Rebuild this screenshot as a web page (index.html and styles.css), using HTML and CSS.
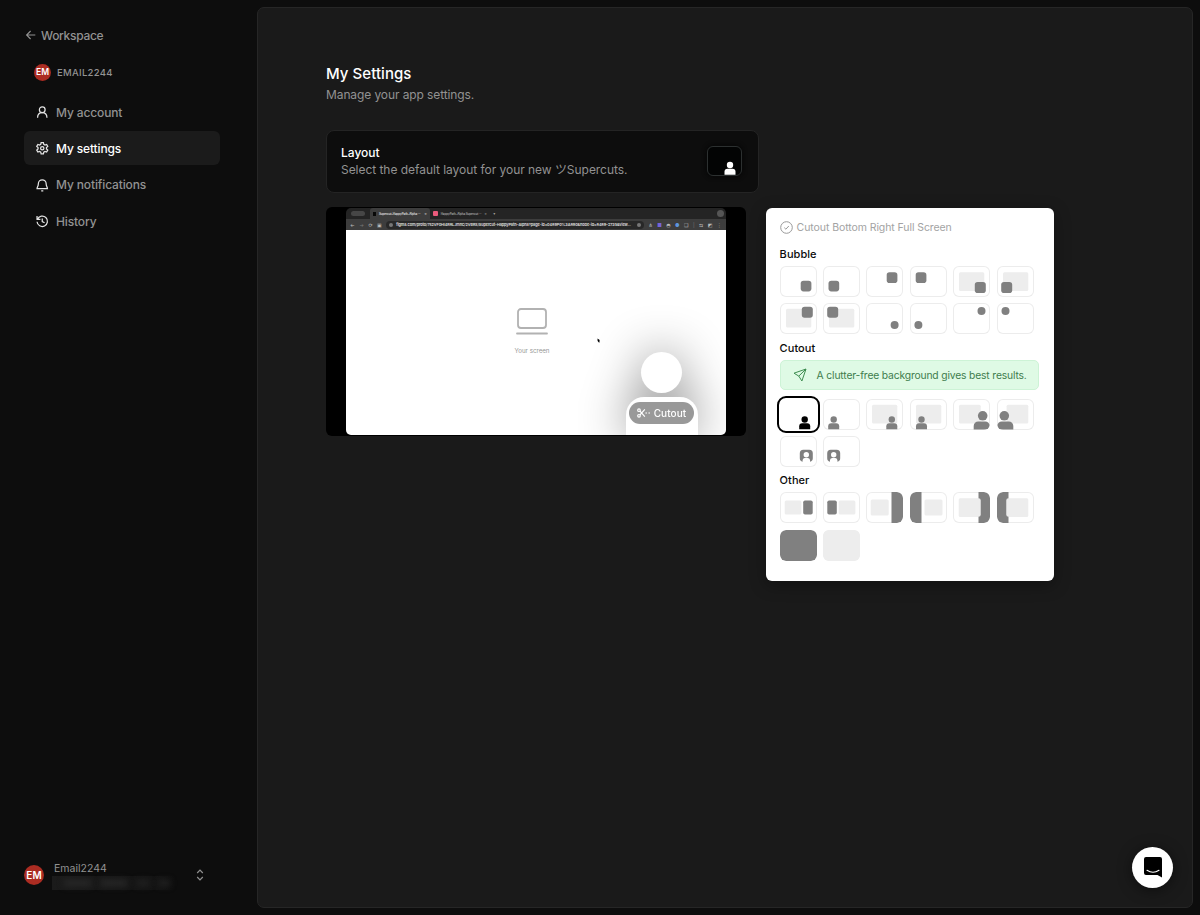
FILE: index.html
```
<!DOCTYPE html>
<html lang="en">

<head>
    <meta charset="UTF-8">
    <meta name="viewport" content="width=device-width, initial-scale=1.0">
    <title>My Settings</title>
    <link rel="stylesheet" href="styles.css">
</head>

<body>
    <!-- shared shapes for the layout tiles -->
    <svg class="defs" width="0" height="0">
        <symbol id="person" viewBox="0 0 11 13" overflow="visible">
            <circle cx="5.5" cy="3.2" r="3.2" />
            <path d="M0 13V10a3 3 0 0 1 3-3h5a3 3 0 0 1 3 3v3z" />
        </symbol>
        <symbol id="framed" viewBox="0 0 13 12" overflow="visible">
            <path fill-rule="evenodd" d="M3.5 0h6A3.5 3.5 0 0 1 13 3.5v5A3.5 3.5 0 0 1 10.2 12V10.5Q10.2 8.6 8.2 8.3H4.8Q2.8 8.6 2.8 10.5V12A3.5 3.5 0 0 1 0 8.5v-5A3.5 3.5 0 0 1 3.5 0zM6.5 2.2a2.7 2.7 0 1 0 0 5.4a2.7 2.7 0 1 0 0-5.4z" />
        </symbol>
    </svg>

    <aside class="sidebar">
        <a class="back">
            <svg width="12" height="12" viewBox="0 0 12 12"><path d="M10.3 6H1.7M5.6 2L1.6 6l4 4" /></svg>
            <span>Workspace</span>
        </a>
        <div class="team">
            <span class="avatar avatar-sm">EM</span>
            <span class="team-name">EMAIL2244</span>
        </div>
        <nav class="menu">
            <a class="menu-item">
                <svg viewBox="0 0 24 24"><circle cx="12" cy="7" r="5.5" /><path d="M3 22.500c0-6 3.500-10 9-10s9 4 9 10" /></svg>
                <span>My account</span>
            </a>
            <a class="menu-item active">
                <svg viewBox="0 0 24 24"><path d="M9.800 1h4.400l.7 3.400 2.300 1.350 3.200-1.150 2.200 3.800-2.500 2.350v2.500l2.500 2.350-2.200 3.800-3.200-1.150-2.300 1.350-.7 3.400H9.800l-.7-3.400-2.300-1.350-3.200 1.150-2.200-3.800 2.500-2.350v-2.500L1.400 8.400l2.200-3.800 3.200 1.150 2.300-1.350z" /><circle cx="12" cy="12" r="3.200" /></svg>
                <span>My settings</span>
            </a>
            <a class="menu-item">
                <svg viewBox="0 0 24 24"><path d="M4.500 9a7.500 7.500 0 0 1 15 0c0 5 2.500 6.500 2.500 9.500H2C2 15.500 4.500 14 4.500 9zM10 22.800h4" /></svg>
                <span>My notifications</span>
            </a>
            <a class="menu-item">
                <svg viewBox="0 0 24 24"><path d="M2 2v6.500h6.500M2.800 8A10 10 0 1 1 2 13M12 6.500v6l4.500 2.300" /></svg>
                <span>History</span>
            </a>
        </nav>
        <div class="user">
            <span class="avatar">EM</span>
            <div class="user-info">
                <span>Email2244</span>
                <div class="redacted"><i></i><i></i><i></i><i></i></div>
            </div>
            <svg class="chevrons" width="8" height="12" viewBox="0 0 8 12"><path d="M1.200 4L4 1.200 6.800 4M1.200 8L4 10.800 6.800 8" /></svg>
        </div>
    </aside>

    <main class="content">
        <h1>My Settings</h1>
        <p class="subtitle">Manage your app settings.</p>

        <section class="layout-card">
            <div>
                <h2>Layout</h2>
                <p>Select the default layout for your new ツSupercuts.</p>
            </div>
            <div class="current">
                <svg width="33" height="28" viewBox="0 0 33 28"><use href="#person" x="16.500" y="14.800" width="11" height="13" /></svg>
            </div>
        </section>

        <div class="row">
            <div class="preview">
                <div class="screen">
                    <div class="tabs">
                        <i class="window-btns"></i>
                        <span class="tab tab-active"><i class="dot"></i><b>Supercut–HappyPath–Alpha ···</b><em>×</em></span>
                        <span class="tab"><i class="dot pink"></i><b>HappyPath–Alpha Supercut ···</b><em>×</em></span>
                        <span class="plus">+</span>
                        <i class="tab-menu"></i>
                    </div>
                    <div class="toolbar">
                        <span>←</span><span class="dim">→</span><span>⟳</span><span>▣</span>
                        <div class="url"><i></i><b>figma.com/proto/7s2VF0HI4R8LJmnc/2VBRx/Supercut–HappyPath–Alpha?page-id=0489P0%3A890&amp;node-id=8489–2735&amp;view...</b><i></i></div>
                        <span>⋔</span><span class="violet">■</span><span>◓</span><span class="blue">●</span><span>❑</span><span class="dim">|</span><span>⇆</span><span>◩</span><span>⋮</span>
                    </div>
                    <div class="page">
                        <div class="your-screen">
                            <svg width="34" height="28" viewBox="0 0 34 28"><rect x="3" y="1" width="28" height="19" rx="3" /><path d="M2 25.500h30" stroke-linecap="round" /></svg>
                            <span>Your screen</span>
                        </div>
                        <svg class="cursor" width="4" height="5" viewBox="0 0 4 5"><path d="M.5.500l2.500 1.800-.8.500.6 1.500-.9.200L.6 3z" /></svg>
                        <div class="figure">
                            <div class="head"></div>
                            <div class="torso">
                                <div class="pill">
                                    <svg width="14" height="10" viewBox="0 0 14 10"><circle cx="2" cy="2.200" r="1.300" /><circle cx="2" cy="7.800" r="1.300" /><path d="M3 3.100L7.800 8.600M3 6.900L7.800 1.400M8.400 5h1.600M11.400 5h1.600" /></svg>
                                    Cutout
                                </div>
                            </div>
                        </div>
                    </div>
                </div>
            </div>

            <div class="picker">
                <div class="selected-name">
                    <svg width="13" height="13" viewBox="0 0 13 13"><circle cx="6.500" cy="6.500" r="5.800" /><path d="M4.300 6.700l1.600 1.500 2.900-3.200" /></svg>
                    <span>Cutout Bottom Right Full Screen</span>
                </div>

                <h3>Bubble</h3>
                <div class="tiles">
                    <svg class="tile" viewBox="0 0 37 31"><rect x="20.700" y="14.700" width="10.700" height="10.700" rx="2.800" /></svg>
                    <svg class="tile" viewBox="0 0 37 31"><rect x="5.500" y="14.700" width="10.700" height="10.700" rx="2.800" /></svg>
                    <svg class="tile" viewBox="0 0 37 31"><rect x="20.700" y="6.300" width="10.700" height="10.700" rx="2.800" /></svg>
                    <svg class="tile" viewBox="0 0 37 31"><rect x="5.700" y="6.300" width="10.700" height="10.700" rx="2.800" /></svg>
                    <svg class="tile" viewBox="0 0 37 31"><rect class="light" x="6" y="6.300" width="25.300" height="18.700" rx="1.500" /><rect x="21.800" y="16" width="11" height="11" rx="2.800" /></svg>
                    <svg class="tile" viewBox="0 0 37 31"><rect class="light" x="6" y="6.300" width="25.300" height="18.700" rx="1.500" /><rect x="4.200" y="16" width="11" height="11" rx="2.800" /></svg>
                    <svg class="tile" viewBox="0 0 37 31"><rect class="light" x="6" y="5.800" width="25.300" height="18.700" rx="1.500" /><rect x="21.800" y="3.800" width="11" height="11" rx="2.800" /></svg>
                    <svg class="tile" viewBox="0 0 37 31"><rect class="light" x="6" y="5.800" width="25.300" height="18.700" rx="1.500" /><rect x="4.200" y="3.800" width="11" height="11" rx="2.800" /></svg>
                    <svg class="tile" viewBox="0 0 37 31"><circle cx="28.600" cy="22" r="4" /></svg>
                    <svg class="tile" viewBox="0 0 37 31"><circle cx="8.400" cy="22" r="4" /></svg>
                    <svg class="tile" viewBox="0 0 37 31"><circle cx="28.500" cy="8" r="4" /></svg>
                    <svg class="tile" viewBox="0 0 37 31"><circle cx="8.500" cy="8" r="4" /></svg>
                </div>

                <h3>Cutout</h3>
                <div class="tip">
                    <svg width="14" height="14" viewBox="0 0 14 14"><path d="M13 1L1 5.200l4.800 2.900L8.900 13zM13 1L5.800 8.100" /></svg>
                    <span>A clutter-free background gives best results.</span>
                </div>
                <div class="tiles">
                    <svg class="tile selected" viewBox="0 0 37 31"><use href="#person" x="19.200" y="17.300" width="11" height="13" /></svg>
                    <svg class="tile" viewBox="0 0 37 31"><use href="#person" x="5.200" y="17.300" width="11" height="13" /></svg>
                    <svg class="tile" viewBox="0 0 37 31"><rect class="light" x="6" y="5.800" width="25.300" height="18.700" rx="1.500" /><use href="#person" x="20.300" y="17.300" width="11" height="13" /></svg>
                    <svg class="tile" viewBox="0 0 37 31"><rect class="light" x="6" y="5.800" width="25.300" height="18.700" rx="1.500" /><use href="#person" x="6" y="17.300" width="11" height="13" /></svg>
                    <svg class="tile" viewBox="0 0 37 31"><rect class="light" x="6" y="5.800" width="21.700" height="18.700" rx="1.500" /><circle cx="29.700" cy="16.800" r="4.800" /><path d="M20.700 30.600V27a4.500 4.500 0 0 1 4.500-4.500h7A4.500 4.500 0 0 1 36.700 27q-.5 3.600-4 3.600z" /></svg>
                    <svg class="tile" viewBox="0 0 37 31"><rect class="light" x="9.600" y="5.800" width="21.700" height="18.700" rx="1.500" /><circle cx="7.300" cy="16.800" r="4.800" /><path d="M16.300 30.600V27a4.500 4.500 0 0 0-4.500-4.500h-7A4.500 4.500 0 0 0 .3 27q.5 3.600 4 3.600z" /></svg>
                    <svg class="tile" viewBox="0 0 37 31"><use href="#framed" x="19.800" y="13.800" width="13" height="12" /></svg>
                    <svg class="tile" viewBox="0 0 37 31"><use href="#framed" x="4.200" y="13.800" width="13" height="12" /></svg>
                </div>

                <h3>Other</h3>
                <div class="tiles">
                    <svg class="tile" viewBox="0 0 37 31"><rect class="light" x="4.700" y="8.500" width="16.700" height="14" rx="1.500" /><rect x="23.200" y="8.500" width="9.500" height="14" rx="1.800" /></svg>
                    <svg class="tile" viewBox="0 0 37 31"><rect x="4.300" y="8.500" width="9.500" height="14" rx="1.800" /><rect class="light" x="15.700" y="8.500" width="16.700" height="14" rx="1.500" /></svg>
                    <svg class="tile" viewBox="0 0 37 31"><rect class="light" x="4.700" y="7.500" width="18" height="16" rx="1.500" /><path d="M25.500 0H31a6 6 0 0 1 6 6v19a6 6 0 0 1-6 6h-5.500z" /></svg>
                    <svg class="tile" viewBox="0 0 37 31"><path d="M11.500 0H6a6 6 0 0 0-6 6v19a6 6 0 0 0 6 6h5.500z" /><rect class="light" x="14.500" y="7.500" width="18" height="16" rx="1.500" /></svg>
                    <svg class="tile" viewBox="0 0 37 31"><rect class="light" x="5.700" y="6.300" width="22" height="18.700" rx="1.500" /><path d="M25.500 0H31a6 6 0 0 1 6 6v19a6 6 0 0 1-6 6h-5.500v-6.200q2.200 0 2.200-2V8.200q0-2-2.200-2z" /></svg>
                    <svg class="tile" viewBox="0 0 37 31"><rect class="light" x="9.300" y="6.300" width="22" height="18.700" rx="1.500" /><path d="M11.500 0H6a6 6 0 0 0-6 6v19a6 6 0 0 0 6 6h5.500v-6.200q-2.200 0-2.200-2V8.200q0-2 2.200-2z" /></svg>
                    <svg class="tile" viewBox="0 0 37 31"><rect width="37" height="31" rx="6" /></svg>
                    <svg class="tile" viewBox="0 0 37 31"><rect class="light" width="37" height="31" rx="6" /></svg>
                </div>
            </div>
        </div>
    </main>

    <button class="chat">
        <svg width="18" height="21" viewBox="0 0 18 21"><path d="M2 0h14a2 2 0 0 1 2 2v18.500L13.500 18H2a2 2 0 0 1-2-2V2a2 2 0 0 1 2-2z" /><path class="smile" d="M3 13.300q6 4 12 0" /></svg>
    </button>
</body>

</html>
```
FILE: styles.css
```
* {
    box-sizing: border-box;
}

body {
    margin: 0;
    height: 915px;
    display: flex;
    overflow: hidden;
    background: #0d0d0d;
    color: #fff;
    font-family: Inter, "Noto Sans CJK JP", sans-serif;
    font-size: 12px;
}

h1, h2, h3, p {
    margin: 0;
    font-weight: 500;
}

svg {
    display: block;
    flex: none;
}

.defs {
    position: absolute;
}

/* sidebar */
.sidebar {
    width: 257px;
    flex: none;
    display: flex;
    flex-direction: column;
    padding: 25px 37px 23px 24px;
    color: #929292;
}

.back {
    display: flex;
    align-items: center;
    gap: 4px;
    height: 20px;
    padding-left: 1px;
    font-size: 12px;
    font-weight: 500;
    letter-spacing: -0.3px;
}

.back svg {
    fill: none;
    stroke: #929292;
    stroke-width: 1.1;
}

.team {
    display: flex;
    align-items: center;
    gap: 6px;
    height: 20px;
    margin-top: 17px;
    padding-left: 10px;
}

.team-name {
    font-size: 9.5px;
    font-weight: 500;
    letter-spacing: 0.3px;
}

.avatar {
    display: flex;
    align-items: center;
    justify-content: center;
    flex: none;
    width: 20px;
    height: 20px;
    border-radius: 50%;
    background: #ab2c22;
    color: #fff;
    font-size: 10px;
    font-weight: 600;
}

.avatar-sm {
    width: 17px;
    height: 17px;
    font-size: 8.5px;
}

.menu {
    display: flex;
    flex-direction: column;
    gap: 2.4px;
    margin-top: 13px;
}

.menu-item {
    display: flex;
    align-items: center;
    gap: 7.5px;
    height: 34px;
    padding-left: 12px;
    border-radius: 6px;
    font-size: 12px;
    font-weight: 500;
    letter-spacing: -0.13px;
}

.menu-item svg {
    width: 12.5px;
    height: 12.5px;
    fill: none;
    stroke: #e4e4e4;
    stroke-width: 2.4;
    overflow: visible;
}

.menu-item.active {
    background: #1b1b1b;
    color: #fff;
}

.user {
    display: flex;
    align-items: center;
    height: 34px;
    margin-top: auto;
}

.user-info {
    width: 133px;
    margin-left: 10px;
    padding-top: 1px;
    font-size: 10.5px;
    line-height: 14px;
}

.redacted {
    display: flex;
    gap: 10px;
    width: 122px;
    height: 14px;
    padding: 4px 4px 4px 12px;
    margin-left: -2px;
    background: linear-gradient(to right, #1b1b1b, #131313 90%, #0d0d0d);
}

.redacted i {
    width: 28px;
    height: 6px;
    background: #292929;
    filter: blur(3px);
}

.redacted i:nth-child(n+3) {
    width: 12px;
    background: #222;
}

.chevrons {
    margin-left: 9px;
    fill: none;
    stroke: #929292;
    stroke-width: 1.2;
}

/* content */
.content {
    flex: none;
    width: 936px;
    height: 901px;
    margin-top: 7px;
    padding: 56px 68px 0;
    border: 1px solid #262626;
    border-radius: 7px;
    background: #1a1a1a;
}

h1 {
    font-size: 15px;
    line-height: 19px;
    letter-spacing: 0.05px;
}

.subtitle {
    margin-top: 4px;
    font-size: 12px;
    font-weight: 400;
    line-height: 16px;
    color: #929292;
    letter-spacing: -0.1px;
}

.layout-card {
    display: flex;
    align-items: center;
    justify-content: space-between;
    width: 433px;
    height: 63px;
    margin-top: 27px;
    padding: 0 16px 1px 14px;
    border: 1px solid #242424;
    border-radius: 8px;
    background: #0d0d0d;
}

.layout-card h2 {
    font-size: 12px;
    line-height: 17px;
}

.layout-card p {
    font-size: 12px;
    font-weight: 400;
    line-height: 17px;
    color: #929292;
    letter-spacing: -0.04px;
}

.current {
    border: 1px solid #2c3030;
    border-radius: 6px;
    width: 35px;
    height: 30px;
    background: #030404;
    fill: #fff;
    box-shadow: 0 0 4px 1px #070707;
}

.row {
    display: flex;
    align-items: flex-start;
    gap: 20px;
    margin-top: 14px;
}

/* preview of the recorded screen */
.preview {
    width: 420px;
    height: 229px;
    padding: 1px 20px;
    border-radius: 6px;
    background: #000;
}

.screen {
    display: flex;
    flex-direction: column;
    height: 227px;
    overflow: hidden;
    border-radius: 5px;
    font-family: Inter, "DejaVu Sans", sans-serif;
}

.tabs {
    display: flex;
    align-items: center;
    height: 11px;
    padding: 0 2px 0 5px;
    background: #242424;
    font-size: 4px;
}

.window-btns {
    width: 14px;
    height: 5px;
    margin-right: 5px;
    border-radius: 3px;
    background: #464646;
}

.tab {
    display: flex;
    align-items: center;
    gap: 3px;
    width: 60px;
    height: 11px;
    padding: 0 3px;
    border-radius: 3px 3px 0 0;
    white-space: nowrap;
    color: #aaa;
}

.tab b {
    flex: 1;
    font-size: 3px;
    font-weight: 600;
    letter-spacing: -0.1px;
}

.tab em {
    font-style: normal;
}

.tab-active {
    background: #3d3d3d;
    color: #e0e0e0;
}

.dot {
    width: 3px;
    height: 4px;
    background: #080808;
}

.pink {
    width: 5px;
    height: 5px;
    border-radius: 1px;
    background: #ea5b7c;
}

.plus {
    margin-left: 3px;
}

.tab-menu {
    width: 7px;
    height: 7px;
    margin-left: auto;
    border-radius: 50%;
    background: #555;
}

.toolbar {
    display: flex;
    align-items: center;
    justify-content: space-between;
    height: 11px;
    padding: 0 4px;
    background: #3d3d3d;
    color: #bbb;
    font-size: 5px;
}

.url {
    display: flex;
    align-items: center;
    gap: 3px;
    width: 258px;
    height: 8px;
    padding: 0 3px;
    border-radius: 4px;
    background: #282828;
}

.url b {
    flex: 1;
    font-size: 3.8px;
    font-weight: 600;
    color: #e0e0e0;
    white-space: nowrap;
    letter-spacing: -0.06px;
}

.url i {
    width: 4px;
    height: 4px;
    border-radius: 50%;
    background: #777;
}

.dim {
    color: #777;
}

.violet {
    color: #7664d8;
}

.blue {
    color: #5e95dc;
}

.page {
    position: relative;
    flex: 1;
    overflow: hidden;
    background: #fff;
}

.your-screen {
    display: flex;
    flex-direction: column;
    align-items: center;
    width: 372px;
    padding-top: 78px;
    color: #969696;
    font-size: 6.2px;
}

.your-screen svg {
    fill: none;
    stroke: #b2b2b2;
    stroke-width: 1.8;
}

.your-screen span {
    margin-top: 11px;
}

.cursor {
    position: absolute;
    left: 251px;
    top: 108px;
}

.figure {
    position: absolute;
    right: 28.5px;
    bottom: 0;
    width: 72px;
    display: flex;
    flex-direction: column;
    align-items: center;
    gap: 4px;
    filter: drop-shadow(0 0 24px rgba(0, 0, 0, 0.45));
}

.head {
    width: 41px;
    height: 41px;
    border-radius: 50%;
    background: #fff;
}

.torso {
    display: flex;
    justify-content: center;
    width: 72px;
    height: 38px;
    padding-top: 5px;
    border-radius: 18px 18px 0 0;
    background: #fff;
}

.pill {
    display: flex;
    align-items: center;
    justify-content: center;
    gap: 3px;
    width: 65px;
    height: 22px;
    border-radius: 11px;
    background: #999;
    color: #fff;
    font-size: 10px;
    font-weight: 500;
    letter-spacing: 0.1px;
}

.pill svg {
    fill: none;
    stroke: #fff;
    stroke-width: 1.2;
}

/* layout picker */
.picker {
    width: 288px;
    height: 373px;
    padding: 13px 14px 0;
    margin: 0.6px 0 0 -0.4px;
    border-radius: 6px;
    background: #fff;
    color: #0b0b0b;
    box-shadow: 0 4px 16px rgba(0, 0, 0, 0.35);
}

.selected-name {
    display: flex;
    align-items: center;
    gap: 4px;
    height: 14px;
    color: #a3a3a3;
    font-size: 10.5px;
    letter-spacing: -0.08px;
}

.selected-name svg {
    fill: none;
    stroke: #999;
    stroke-width: 1;
}

h3 {
    height: 14px;
    font-size: 11px;
    line-height: 14px;
    letter-spacing: 0.05px;
}

.selected-name + h3 {
    margin-top: 12px;
}

.tiles {
    display: grid;
    grid-template-columns: repeat(6, 37px);
    gap: 6.4px;
    margin: 5px 0 7px;
    fill: #808080;
}

.tile {
    width: 37px;
    height: 31px;
    border-radius: 6px;
    box-shadow: inset 0 0 0 1px #ececec;
}

.tile .light {
    fill: #ededed;
}

.tile.selected {
    fill: #000;
    outline: 2px solid #000;
    outline-offset: 1px;
    box-shadow: none;
}

.tip {
    display: flex;
    align-items: center;
    gap: 10px;
    width: 259px;
    height: 30px;
    margin: 5px 0 9px;
    padding-left: 12px;
    border: 1px solid #cdf3d6;
    border-radius: 5px;
    background: #dffae5;
    color: #3e7d4d;
    font-size: 10.3px;
    letter-spacing: -0.15px;
    white-space: nowrap;
}

.tip + .tiles {
    margin-bottom: 6px;
}

.tip svg {
    fill: none;
    stroke: #3e8d50;
    stroke-width: 1;
    stroke-linejoin: round;
}

/* floating chat launcher */
.chat {
    position: fixed;
    right: 27px;
    bottom: 27px;
    display: flex;
    align-items: center;
    justify-content: center;
    width: 41px;
    height: 41px;
    padding: 0;
    border: none;
    border-radius: 50%;
    background: #fff;
    box-shadow: 0 2px 14px rgba(0, 0, 0, 0.5);
}

.chat .smile {
    fill: none;
    stroke: #fff;
    stroke-width: 1.1;
    stroke-linecap: round;
}
```
